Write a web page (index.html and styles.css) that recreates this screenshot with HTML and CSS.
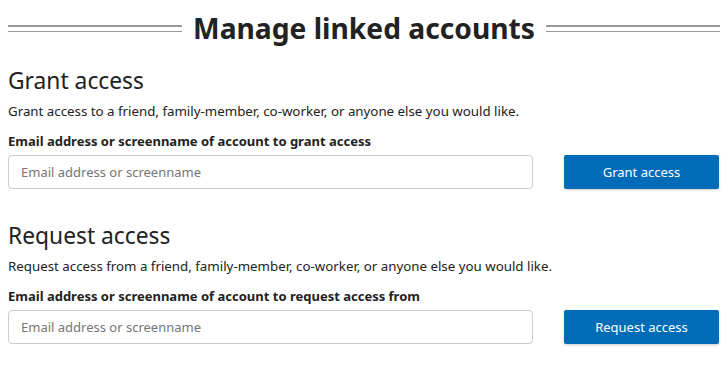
FILE: index.html
```html
<!DOCTYPE html>
<html lang="en">
<head>
  <meta charset="UTF-8" />
  <title>Manage linked accounts</title>
  <link rel="stylesheet" href="styles.css">
</head>
<body>
  <div class="page">
    <h1 class="title"><span>Manage linked accounts</span></h1>

    <!-- Grant -->
    <section class="block">
      <h2 class="block-header">Grant access</h2>
      <p class="block-desc">Grant access to a friend, family-member, co-worker, or anyone else you would like.</p>
      <label class="field-label" for="grant-input">Email address or screenname of account to grant access</label>
      <div class="field-row">
        <input id="grant-input" class="field-input" type="text" placeholder="Email address or screenname" />
        <button class="field-btn" type="button">Grant access</button>
      </div>
    </section>

    <!-- Request -->
    <section class="block">
      <h2 class="block-header">Request access</h2>
      <p class="block-desc">Request access from a friend, family-member, co-worker, or anyone else you would like.</p>
      <label class="field-label" for="request-input">Email address or screenname of account to request access from</label>
      <div class="field-row">
        <input id="request-input" class="field-input" type="text" placeholder="Email address or screenname" />
        <button class="field-btn" type="button">Request access</button>
      </div>
    </section>
  </div>
</body>
</html>
```

FILE: styles.css
```css
* {
  box-sizing: border-box;
}

body {
  margin: 0;
  background: #fff;
  color: #222;
  font-family: 'Noto Sans', 'Open Sans', Arial, sans-serif;
}

.page {
  padding: 0 8px;
}

/* Title with double rules on both sides */
.title {
  display: flex;
  align-items: center;
  gap: 11px;
  margin: 0;
  padding-top: 10px;
  height: 46px;
  font-size: 28.2px;
  font-weight: 700;
  color: #222;
}
.title::before,
.title::after {
  content: "";
  flex: 1;
  height: 4px;
  border-top: 2px solid #999;
  border-bottom: 1px solid #999;
}

.block {
  margin-bottom: 12px;
}

.block-header {
  margin: 0;
  padding-top: 19px;
  font-size: 22.8px;
  font-weight: 400;
  line-height: 32px;
}

.block-desc {
  margin: 4px 0 0;
  font-size: 13.3px;
  line-height: 20px;
}

.field-label {
  display: block;
  margin-top: 10px;
  font-size: 13px;
  font-weight: 700;
  line-height: 20px;
}

.field-row {
  display: flex;
  gap: 31px;
  margin-top: 4px;
}

.field-input {
  width: 525px;
  height: 34px;
  padding: 0 12px;
  border: 1px solid #ccc;
  border-radius: 4px;
  font-family: inherit;
  font-size: 13px;
  color: #333;
}
.field-input::placeholder {
  color: #767676;
}

.field-btn {
  width: 155px;
  height: 34px;
  border: none;
  border-radius: 2px;
  background: #006cb8;
  color: #fff;
  font-family: inherit;
  font-size: 13px;
  box-shadow: 0 1px 3px rgba(0, 0, 0, 0.2);
  cursor: pointer;
}
```
